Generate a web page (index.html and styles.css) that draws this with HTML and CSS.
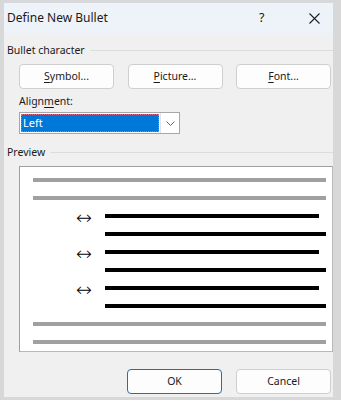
FILE: index.html
```html
<!DOCTYPE html>
<html>
<head>
<meta charset="utf-8">
<link rel="stylesheet" href="styles.css">
</head>
<body>
<div class="window">
  <div class="titlebar">
    <span class="title">Define New Bullet</span>
    <span class="help">?</span>
    <span class="close">
      <svg width="11" height="11" viewBox="0 0 11 11"><path d="M0.5 0.5 L10.5 10.5 M10.5 0.5 L0.5 10.5" stroke="#1f1f1f" stroke-width="1.1" fill="none"/></svg>
    </span>
  </div>
  <div class="content">
    <div class="group-label"><span>Bullet character</span><span class="rule"></span></div>
    <div class="btn-row">
      <button class="btn"><u>S</u>ymbol...</button>
      <button class="btn"><u>P</u>icture...</button>
      <button class="btn"><u>F</u>ont...</button>
    </div>
    <div class="field-label">Align<u>m</u>ent:</div>
    <div class="combo">
      <div class="combo-value"><span class="combo-sel">Left</span></div>
      <div class="combo-arrow">
        <svg width="9" height="5" viewBox="0 0 9 5"><path d="M0.5 0.5 L4.5 4.5 L8.5 0.5" stroke="#6a6a6a" stroke-width="1" fill="none"/></svg>
      </div>
    </div>
    <div class="group-label preview-label"><span>Preview</span><span class="rule"></span></div>
    <div class="preview">
      <div class="row"><div class="line gray"></div></div>
      <div class="row"><div class="line gray"></div></div>
      <div class="row indent"><span class="bullet">↔</span><div class="line black short"></div></div>
      <div class="row indent"><div class="line black"></div></div>
      <div class="row indent"><span class="bullet">↔</span><div class="line black short"></div></div>
      <div class="row indent"><div class="line black"></div></div>
      <div class="row indent"><span class="bullet">↔</span><div class="line black short"></div></div>
      <div class="row indent"><div class="line black"></div></div>
      <div class="row"><div class="line gray"></div></div>
      <div class="row"><div class="line gray"></div></div>
    </div>
    <div class="footer">
      <button class="btn btn-default">OK</button>
      <button class="btn">Cancel</button>
    </div>
  </div>
</div>
</body>
</html>
```

FILE: styles.css
```css
* { box-sizing: border-box; }
html, body { margin: 0; padding: 0; }
body {
  width: 341px;
  height: 400px;
  overflow: hidden;
  background: #d6d8da;
  font-family: "Noto Sans", "Open Sans", sans-serif;
  font-size: 10.5px;
  color: #1a1a1a;
}
.window {
  width: 341px;
  height: 400px;
  border-style: solid;
  border-color: #d6d8da;
  border-width: 3px 8px 3px 4px;
  background: #f0f0f0;
  display: flex;
  flex-direction: column;
}
.titlebar {
  height: 30px;
  background: #eef3f9;
  display: flex;
  align-items: center;
  padding-left: 3px;
}
.title {
  font-size: 12px;
  flex: 1;
  padding-bottom: 1px;
}
.help {
  font-size: 12.5px;
  width: 10px;
  margin-right: 40px;
  padding-bottom: 1px;
}
.close {
  display: flex;
  width: 11px;
  margin-right: 13px;
}
.content {
  flex: 1;
  display: flex;
  flex-direction: column;
  padding: 0 0 0 3px;
}
.group-label {
  display: flex;
  align-items: center;
  height: 16px;
  line-height: 16px;
  margin-top: 9px;
}
.group-label .rule {
  flex: 1;
  height: 1px;
  background: #dcdcdc;
  margin-left: 5px;
}
.btn-row {
  display: flex;
  justify-content: space-between;
  margin: 6px 2px 0 12px;
}
.btn {
  width: 95px;
  height: 25px;
  background: #fdfdfd;
  border: 1px solid #cfcfcf;
  border-radius: 4px;
  font-family: inherit;
  font-size: 10.5px;
  color: #1a1a1a;
  padding: 0 0 1px 0;
}
.btn u { text-underline-offset: 2px; }
.btn-default {
  border-color: #1a6fc2;
}
.field-label {
  margin: 4px 0 0 12px;
  height: 16px;
  line-height: 16px;
}
.field-label u { text-underline-offset: 2px; }
.combo {
  margin: 3px 0 0 12px;
  width: 161px;
  height: 22px;
  border: 1px solid #a7a7a7;
  background: #fff;
  display: flex;
}
.combo-value {
  flex: 1;
  padding: 1px;
  display: flex;
}
.combo-sel {
  flex: 1;
  background: #0078d7;
  color: #fff;
  outline: 1px dotted #d86a86;
  outline-offset: -1px;
  padding-left: 2px;
  line-height: 17px;
  font-size: 11px;
}
.combo-arrow {
  width: 19px;
  border-left: 1px solid #e2e2e2;
  display: flex;
  align-items: center;
  justify-content: center;
  padding-top: 1px;
}
.preview-label { margin-top: 10px; }
.preview {
  margin: 6px 0 0 12px;
  width: 314px;
  border: 1px solid #a0a0a0;
  border-right-color: #b8b8b8;
  border-bottom-color: #b8b8b8;
  background: #fff;
  padding: 4px 6px 0 13px;
  display: flex;
  flex-direction: column;
}
.row {
  height: 18px;
  display: flex;
  align-items: center;
}
.row.indent { padding-left: 72px; }
.line {
  height: 4px;
  flex: 1;
}
.line.gray { background: #a0a0a0; }
.line.black { background: #000; }
.line.short { margin-right: 7px; }
.bullet {
  position: relative;
  width: 0;
  left: -29px;
  top: 1px;
  font-family: "DejaVu Sans", sans-serif;
  font-weight: 200;
  font-size: 19px;
  line-height: 10px;
  color: #000;
}
.footer {
  display: flex;
  justify-content: flex-end;
  gap: 14px;
  margin: 17px 2px 0 0;
}
```
